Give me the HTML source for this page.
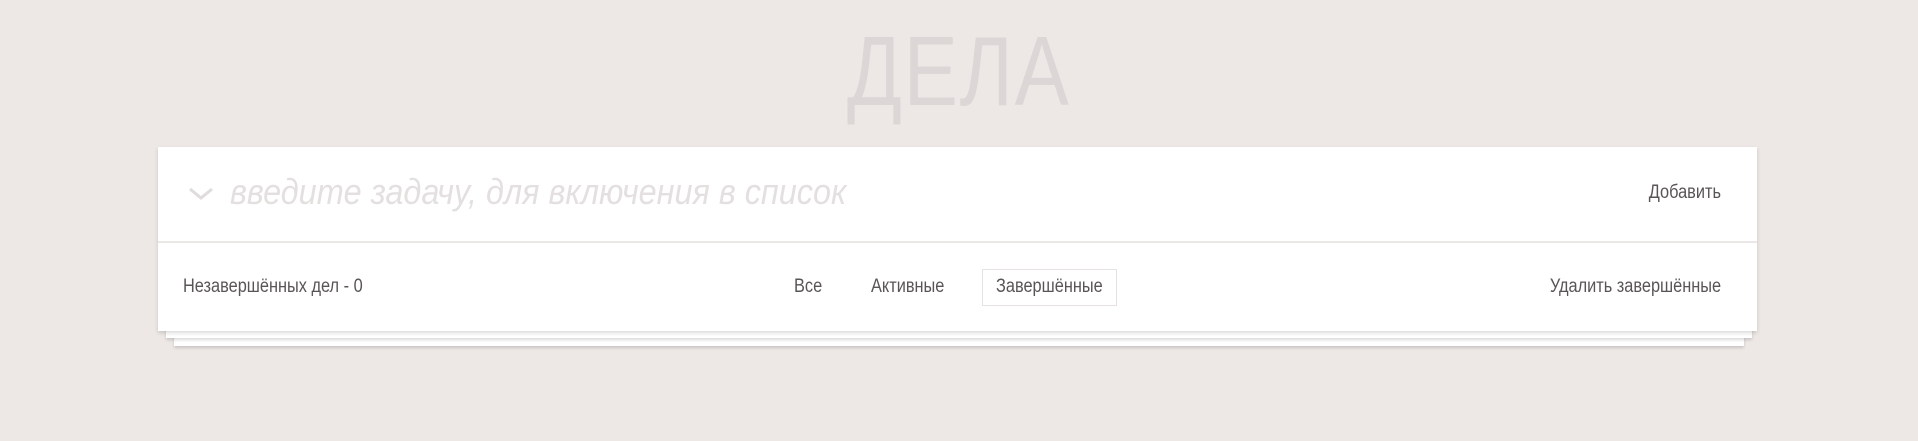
<!DOCTYPE html>
<html><head><meta charset="utf-8"><style>
html,body{margin:0;padding:0;width:1918px;height:441px;overflow:hidden;background:#ede8e6;font-family:"Liberation Sans",sans-serif;}
.title{position:absolute;left:0;width:1918px;top:16px;text-align:center;font-size:98px;line-height:110px;color:#ddd6d6;font-weight:normal;}
.title span{display:inline-block;transform:scaleX(0.83);letter-spacing:2px;}
.l3{position:absolute;left:174px;right:174px;top:334px;height:12px;background:#fff;box-shadow:0 2px 3px rgba(0,0,0,0.15);}
.l2{position:absolute;left:166px;right:166px;top:326px;height:12px;background:#fff;box-shadow:0 2px 3px rgba(0,0,0,0.15);}
.card{position:absolute;left:158px;top:147px;width:1599px;height:184px;background:#fff;box-shadow:0 2px 4px rgba(0,0,0,0.15);}
.div{position:absolute;left:0;right:0;top:94px;height:2px;background:#ebe7e6;}
.t{position:absolute;white-space:nowrap;color:#5a5555;font-size:19px;transform-origin:0 0;}
.ph{position:absolute;left:72px;top:24px;font-size:36px;font-style:italic;color:#e4e0e0;white-space:nowrap;transform:scaleX(0.90);transform-origin:0 0;}
.box{position:absolute;left:824px;top:122px;width:133px;height:35px;border:1px solid #e6e2e2;}
</style></head><body>
<div class="title"><span>ДЕЛА</span></div>
<div class="l3"></div><div class="l2"></div>
<div class="card">
<svg style="position:absolute;left:30px;top:40px" width="26" height="14" viewBox="0 0 26 14"><path d="M2 2 L13 11 L24 2" fill="none" stroke="#e0dcdc" stroke-width="3"/></svg>
<div class="ph">введите задачу, для включения в список</div>
<div class="t" style="right:36px;top:35px;transform:scaleX(0.86);transform-origin:100% 0">Добавить</div>
<div class="div"></div>
<div class="t" style="left:25px;top:129px;transform:scaleX(0.86)">Незавершённых дел - 0</div>
<div class="t" style="left:636px;top:129px;transform:scaleX(0.86)">Все</div>
<div class="t" style="left:713px;top:129px;transform:scaleX(0.86)">Активные</div>
<div class="box"></div>
<div class="t" style="left:838px;top:129px;transform:scaleX(0.86)">Завершённые</div>
<div class="t" style="right:36px;top:129px;transform:scaleX(0.86);transform-origin:100% 0">Удалить завершённые</div>
</div>
</body></html>
